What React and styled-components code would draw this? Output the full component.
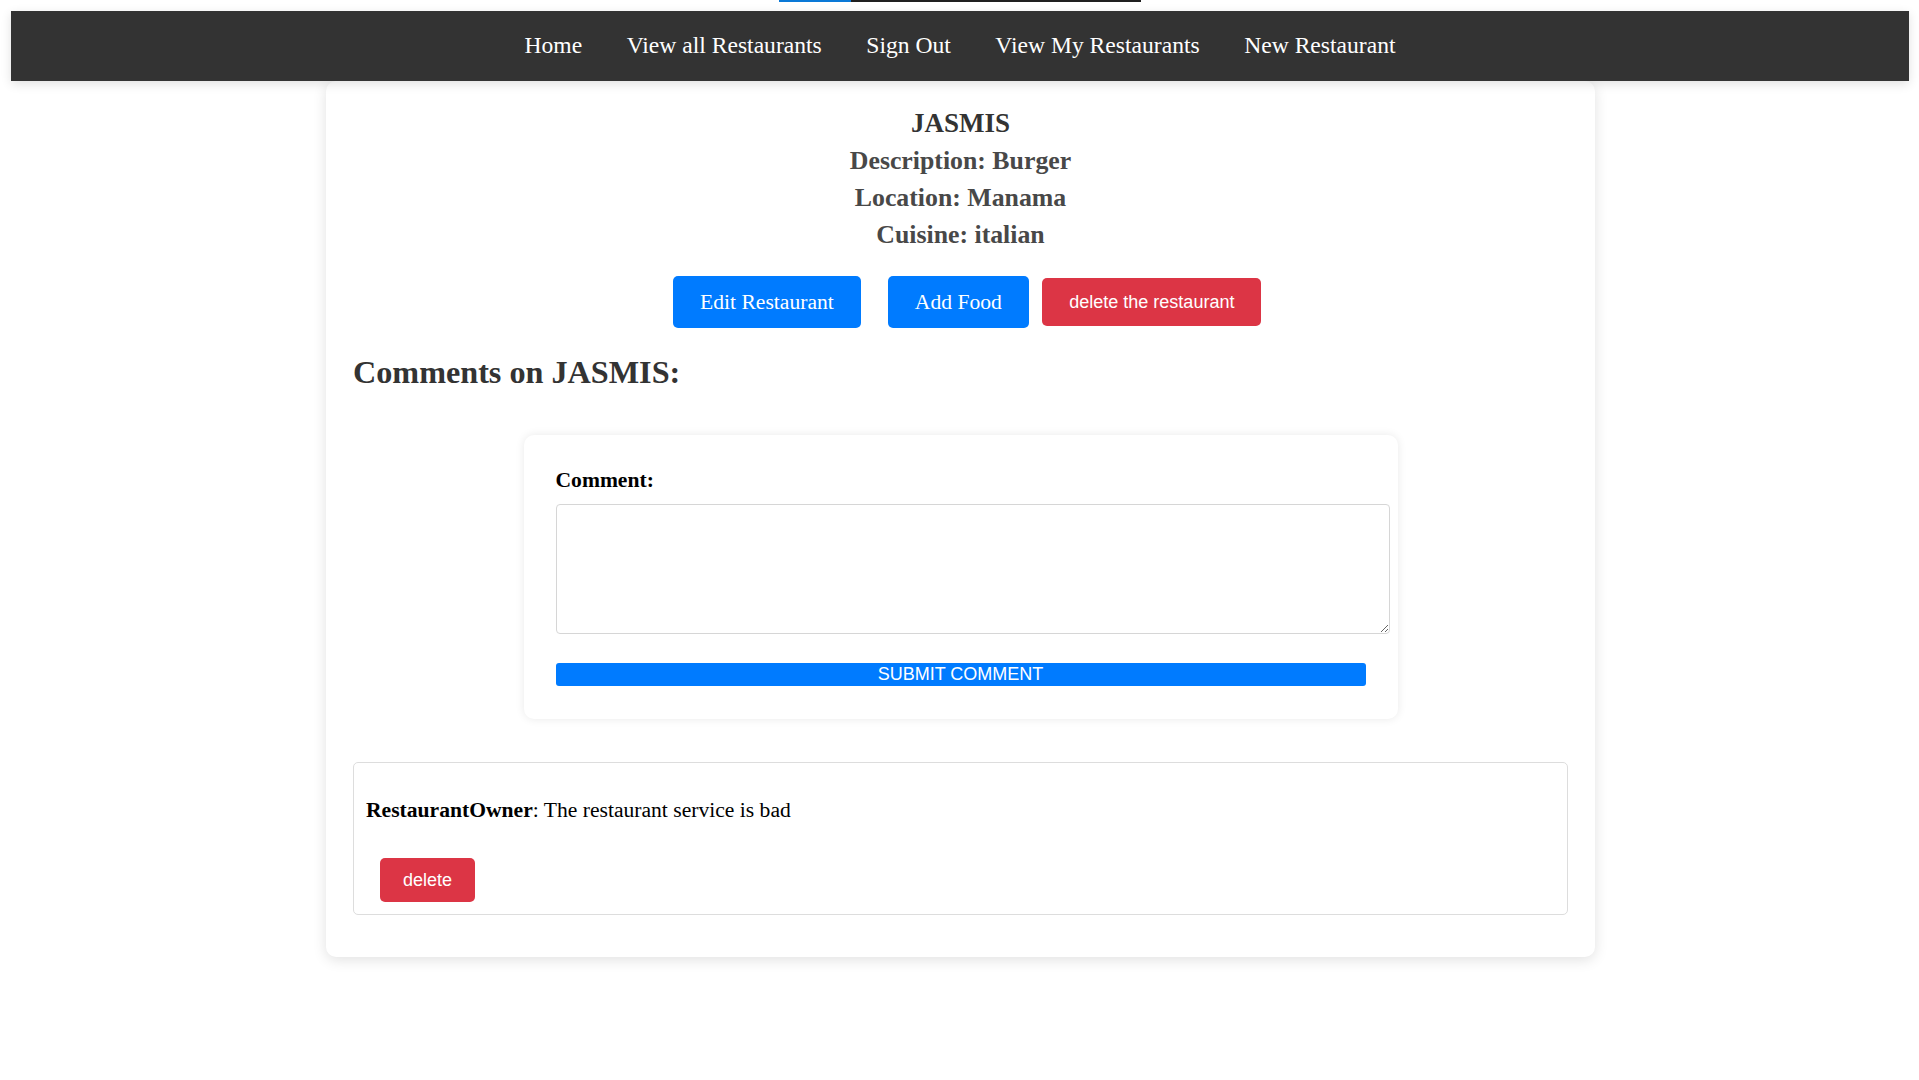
import React from "react";
import styled, { createGlobalStyle } from "styled-components";

const GlobalStyle = createGlobalStyle`
  html, body {
    margin: 0;
    padding: 0;
    background: #ffffff;
    font-family: "Liberation Serif", "Times New Roman", serif;
  }
  * { box-sizing: content-box; }
`;

const LoaderBar = styled.div`
  position: fixed;
  top: 0;
  left: calc(50% - 181px);
  width: 362px;
  height: 2px;
  background: #1f1f1f;
  z-index: 10;
  display: flex;
`;

const LoaderFill = styled.div`
  width: 72px;
  height: 100%;
  background: #0a78d6;
`;

const Page = styled.div`
  padding: 11px 0 40px 2px;
`;

const NavBar = styled.nav`
  position: relative;
  z-index: 2;
  margin: 0 10px 0 9px;
  height: 70px;
  background: #333333;
  display: flex;
  align-items: center;
  justify-content: center;
  gap: 44.5px;
  box-shadow: 0 3px 10px rgba(0, 0, 0, 0.12);
`;

const NavLink = styled.a`
  color: #ffffff;
  text-decoration: none;
  font-size: 23.6px;
  line-height: 27px;
  padding-bottom: 2px;
`;

const Card = styled.main`
  position: relative;
  z-index: 1;
  width: 1215px;
  margin: 0 auto;
  padding: 24px 27px 42px;
  background: #ffffff;
  border-radius: 10px;
  box-shadow: 0 3px 14px rgba(0, 0, 0, 0.12);
`;

const Info = styled.section`
  text-align: center;
`;

const Title = styled.h2`
  margin: 0;
  font-size: 27px;
  line-height: 37px;
  font-weight: bold;
  color: #333333;
`;

const Detail = styled.p`
  margin: 0;
  font-size: 25.8px;
  line-height: 37px;
  font-weight: bold;
  color: #484848;
`;

const ActionRow = styled.div`
  margin-top: 23px;
  display: flex;
  justify-content: center;
  align-items: center;
`;

const PrimaryButton = styled.button`
  height: 52px;
  margin: 0 13.5px;
  padding: 0 27px;
  border: none;
  border-radius: 5px;
  background: #007bff;
  color: #ffffff;
  font-family: "Liberation Serif", "Times New Roman", serif;
  font-size: 21.6px;
  cursor: pointer;
`;

const DangerButton = styled.button`
  height: ${(p) => p.$h}px;
  padding: 0 ${(p) => p.$px}px;
  margin-left: ${(p) => p.$ml || 0}px;
  border: none;
  border-radius: 5px;
  background: #dc3545;
  color: #ffffff;
  font-family: "Liberation Sans", Arial, sans-serif;
  font-size: 18px;
  cursor: pointer;
`;

const SectionHeading = styled.h1`
  margin: 26px 0 0;
  font-size: 32.2px;
  line-height: 37px;
  font-weight: bold;
  color: #333333;
`;

const CommentForm = styled.form`
  width: 810px;
  margin: 44px auto 0;
  padding: 33px 32px;
  background: #ffffff;
  border-radius: 10px;
  box-shadow: 0 0 10px rgba(0, 0, 0, 0.09);
`;

const FieldLabel = styled.label`
  display: block;
  font-size: 21.6px;
  line-height: 25px;
  font-weight: bold;
  color: #000000;
`;

const TextArea = styled.textarea`
  display: block;
  width: 100%;
  height: 106px;
  margin-top: 11px;
  padding: 11px;
  border: 1px solid #d6d6d6;
  border-radius: 4px;
  background: #ffffff;
  font-family: "Liberation Sans", Arial, sans-serif;
  font-size: 16px;
  outline: none;
`;

const SubmitButton = styled.button`
  display: block;
  width: 100%;
  height: 23px;
  margin-top: 29px;
  padding: 0;
  border: none;
  border-radius: 3px;
  background: #007bff;
  color: #ffffff;
  font-family: "Liberation Sans", Arial, sans-serif;
  font-size: 18px;
  line-height: 23px;
  text-transform: uppercase;
  cursor: pointer;
`;

const CommentBox = styled.article`
  margin-top: 43px;
  padding: 0 12px 12px;
  border: 1px solid #dddddd;
  border-radius: 5px;
`;

const CommentText = styled.p`
  margin: 35px 0 0;
  font-size: 21.6px;
  line-height: 25px;
  color: #000000;
`;

const Author = styled.strong`
  font-weight: bold;
`;

const CommentActions = styled.div`
  margin-top: 35px;
  display: flex;
`;

export default function App() {
  const links = [
    "Home",
    "View all Restaurants",
    "Sign Out",
    "View My Restaurants",
    "New Restaurant",
  ];
  return (
    <>
      <GlobalStyle />
      <LoaderBar>
        <LoaderFill />
      </LoaderBar>
      <Page>
        <NavBar>
          {links.map((l) => (
            <NavLink key={l} href="#">
              {l}
            </NavLink>
          ))}
        </NavBar>
        <Card>
          <Info>
            <Title>JASMIS</Title>
            <Detail>Description: Burger</Detail>
            <Detail>Location: Manama</Detail>
            <Detail>Cuisine: italian</Detail>
          </Info>
          <ActionRow>
            <PrimaryButton>Edit Restaurant</PrimaryButton>
            <PrimaryButton>Add Food</PrimaryButton>
            <DangerButton $h={48} $px={27}>
              delete the restaurant
            </DangerButton>
          </ActionRow>
          <SectionHeading>Comments on JASMIS:</SectionHeading>
          <CommentForm onSubmit={(e) => e.preventDefault()}>
            <FieldLabel htmlFor="comment">Comment:</FieldLabel>
            <TextArea id="comment" />
            <SubmitButton type="submit">Submit Comment</SubmitButton>
          </CommentForm>
          <CommentBox>
            <CommentText>
              <Author>RestaurantOwner</Author>: The restaurant service is bad
            </CommentText>
            <CommentActions>
              <DangerButton $h={44} $px={23} $ml={14}>
                delete
              </DangerButton>
            </CommentActions>
          </CommentBox>
        </Card>
      </Page>
    </>
  );
}
